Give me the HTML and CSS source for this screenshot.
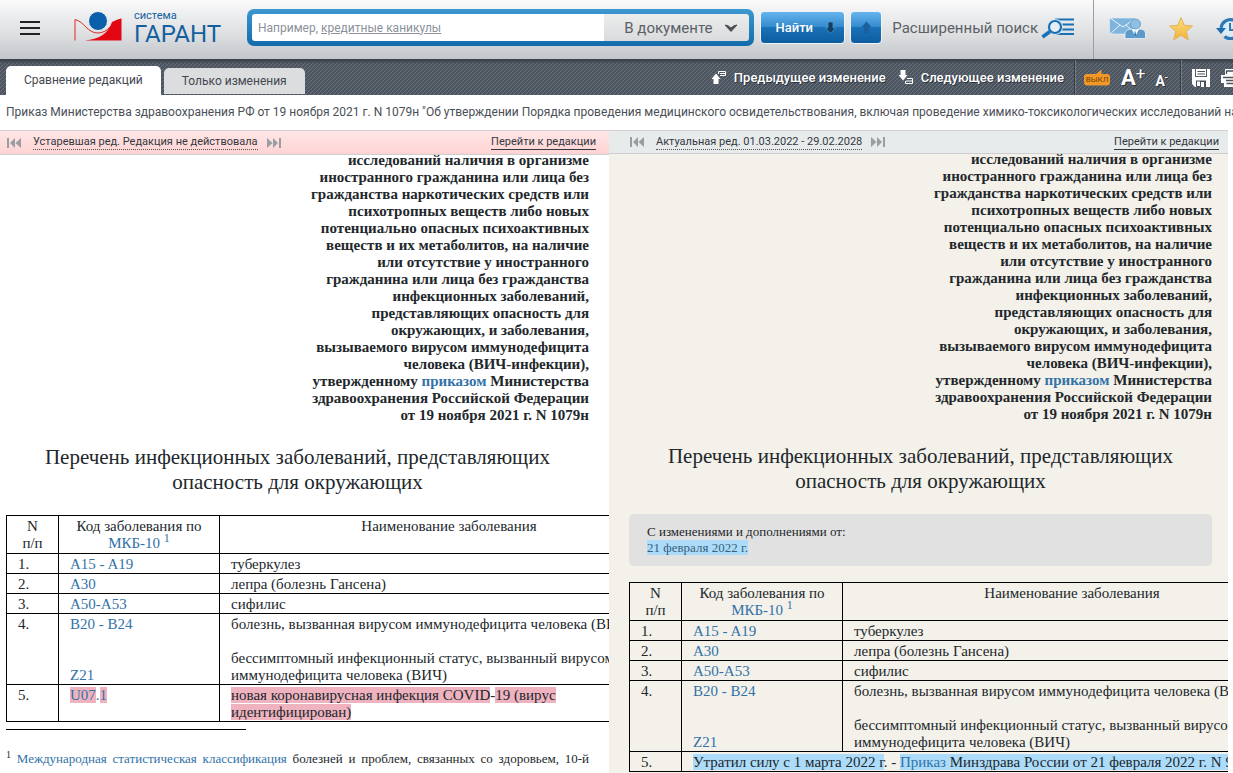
FILE: index.html
```html
<!DOCTYPE html>
<html lang="ru">
<head>
<meta charset="utf-8">
<title>Сравнение редакций — ГАРАНТ</title>
<link rel="stylesheet" href="styles.css">
</head>
<body>
<header class="header">
  <button class="menu" aria-label="Меню"><span></span><span></span><span></span></button>
  <a class="logo" href="#">
    <svg width="48" height="32" viewBox="0 0 48 32" aria-hidden="true">
      <path d="M1 30.500V9.500C11 12 13 23 24 23S37 12 47 9" fill="none" stroke="#e0282a" stroke-width="1"/>
      <path d="M47.500 8.500V30.500H11C25 29 34 24 38 12Q42 9.500 47.500 8.500Z" fill="#e30613"/>
      <circle cx="24" cy="11" r="9.500" fill="#0b5ea9" stroke="#f1f2f3" stroke-width="1"/>
    </svg>
    <span class="logo-text"><span class="logo-small">система</span><span class="logo-big">ГАРАНТ</span></span>
  </a>
  <form class="search">
    <div class="search-box">
      <div class="query">
        <input id="q" type="text" aria-label="Поиск">
        <label class="hint" for="q">Например, <u>кредитные каникулы</u></label>
      </div>
      <div class="scope">
        <select aria-label="Область поиска"><option>В документе</option></select>
        <svg width="14" height="10" viewBox="0 0 14 10" aria-hidden="true"><path d="M1 2Q4 2 7 5Q10 2 13 2L7 8.500Z" fill="#4a4f56" stroke="#4a4f56"/></svg>
      </div>
    </div>
    <button class="blue find" type="button">Найти
      <svg width="11" height="13" viewBox="0 0 11 13" aria-hidden="true"><path d="M3 1H8V7H10.500L5.500 12.500L.5 7H3Z" fill="#123f66" stroke="#5aa4dd" stroke-width=".6"/></svg>
    </button>
    <button class="blue up" type="button" aria-label="Найти выше">
      <svg width="11" height="13" viewBox="0 0 11 13" aria-hidden="true"><path d="M3 12H8V6H10.500L5.500 .5L.5 6H3Z" fill="#1b5f9b"/></svg>
    </button>
  </form>
  <a class="advanced" href="#">Расширенный поиск
    <svg width="34" height="22" viewBox="0 0 34 22" aria-hidden="true">
      <path d="M14 2.500H33M20 7.500H33M20 12.500H33M15 17H33" stroke="#1571b8" stroke-width="2.200"/>
      <circle cx="14" cy="10" r="8" fill="#dfe1e4"/>
      <circle cx="14" cy="10" r="6" fill="#e6edf4" stroke="#1571b8" stroke-width="2.200"/>
      <path d="M9 14.500L1.500 20" stroke="#1571b8" stroke-width="3.500"/>
    </svg>
  </a>
  <nav class="tools" aria-label="Сервисы">
    <a href="#" aria-label="Сообщения">
      <svg width="37" height="24" viewBox="0 0 37 24" aria-hidden="true">
        <path d="M.5 2H27V18H.5Z" fill="#7fb5dc" stroke="#e8f2fa" stroke-width=".6"/>
        <path d="M1 2L14 11L27 2M1 18L11 9M27 18L17 9" stroke="#e8f2fa" fill="none"/>
        <path d="M16 22.500V17Q17 13 23 13L26 17L30 13Q36 13 36.500 17V22.500Z" fill="#5d9aca" stroke="#e8f2fa" stroke-width=".8"/>
        <path d="M23 13L26 21L30 13Z" fill="#fff"/><path d="M26 14L27.500 20L25 20Z" fill="#2f79b4"/>
        <circle cx="26.500" cy="8" r="5" fill="#8fc0e4" stroke="#6aa3d0"/>
      </svg>
    </a>
    <a href="#" aria-label="Избранное">
      <svg width="26" height="26" viewBox="0 0 26 26" aria-hidden="true">
        <defs><linearGradient id="gold" x2="0" y2="1"><stop stop-color="#fbe08a"/><stop offset="1" stop-color="#f2b234"/></linearGradient></defs>
        <path d="M13 2.500L16.300 10.300L24.500 11L18.300 16.500L20.300 24.800L13 20.300L5.700 24.800L7.700 16.500L1.500 11L9.700 10.300Z" fill="url(#gold)" stroke="#e3b354"/>
      </svg>
    </a>
    <a href="#" aria-label="История">
      <svg width="27" height="24" viewBox="0 0 27 24" aria-hidden="true">
        <path d="M5 12A9.500 9.500 0 1 1 8.500 20.500" fill="#dcecf7" stroke="#2d7ab5" stroke-width="3.200"/>
        <path d="M0 12H10L5 18Z" fill="#1e6eae"/>
        <path d="M14 7V14H19" stroke="#2d7ab5" stroke-width="2" fill="none"/>
      </svg>
    </a>
  </nav>
</header>
<div class="bar">
  <nav class="tabs">
    <a class="tab active" href="#">Сравнение редакций</a>
    <a class="tab" href="#">Только изменения</a>
  </nav>
  <div class="actions">
    <a class="change" href="#">
      <svg width="16" height="15" viewBox="0 0 16 15" aria-hidden="true"><path d="M5 3.500L9.500 9H7.500V14H2.500V9H.5Z" fill="#fff"/><path d="M7.500 4V1.500H14.500V5.500H9M9 3.500H14" stroke="#fff" fill="none"/></svg>
      Предыдущее изменение</a>
    <a class="change" href="#">
      <svg width="16" height="15" viewBox="0 0 16 15" aria-hidden="true"><path d="M2.500 0H7.500V5H9.500L5 10.500L.5 5H2.500Z" fill="#fff"/><path d="M9 8.500H14.500V13.500H7.500V11M8 11H14" stroke="#fff" fill="none"/></svg>
      Следующее изменение</a>
  </div>
  <div class="group">
    <button class="off" aria-label="Выключить комментарии">
      <svg width="28" height="18" viewBox="0 0 28 18" aria-hidden="true"><path d="M4 5H13L18.500 .5V5H24Q27 5 27 8V13Q27 16.500 24 16.500H4Q1 16.500 1 13V8Q1 5 4 5Z" fill="#f0982a"/></svg>
      <span>ВЫКЛ</span>
    </button>
    <button class="font larger">A<sup>+</sup></button>
    <button class="font smaller">A<sup>-</sup></button>
  </div>
  <div class="group files">
    <button aria-label="Сохранить">
      <svg width="20" height="20" viewBox="0 0 20 20" aria-hidden="true"><path d="M1 1H4V9H16V1H19V19H4L1 16Z" fill="#fff"/><path d="M5 1H15V8H5Z" fill="#fff"/><path d="M6.500 3.500H14M6.500 6H14" stroke="#49515b"/><path d="M5 12.500H15V19H13V14H10V19H5Z" fill="#49515b"/><path d="M6 13.500H9V18H6Z" fill="#fff"/></svg>
    </button>
    <button aria-label="Печать">
      <svg width="22" height="20" viewBox="0 0 22 20" aria-hidden="true"><path d="M5 1H17V6H20L22 8V15H18V19H4V15H1V7H5Z" fill="#fff"/><path d="M6.500 6V3H16V6M3 9.500H20M6 12.500H16M6.500 15.500H15" stroke="#49515b" stroke-width="1.300" fill="none"/></svg>
    </button>
  </div>
</div>
<h1 class="title">Приказ Министерства здравоохранения РФ от 19 ноября 2021 г. N 1079н "Об утверждении Порядка проведения медицинского освидетельствования, включая проведение химико-токсикологических исследований наличия</h1>
<main class="panes">
  <section class="pane old">
    <div class="pane-head">
      <button class="skip" aria-label="Предыдущая редакция"><svg width="14" height="10" viewBox="0 0 14 10" aria-hidden="true"><path d="M0 0H2V10H0ZM8 0V10L3 5ZM14 0V10L8.500 5Z"/></svg></button>
      <a class="edition" href="#">Устаревшая ред. Редакция не действовала</a>
      <button class="skip" aria-label="Следующая редакция"><svg width="14" height="10" viewBox="0 0 14 10" aria-hidden="true"><path d="M12 0H14V10H12ZM6 0V10L11 5ZM0 0V10L5.500 5Z"/></svg></button>
      <a class="goto" href="#">Перейти к редакции</a>
    </div>
    <article class="doc">
      <p class="appendix">исследований наличия в организме<br>иностранного гражданина или лица без<br>гражданства наркотических средств или<br>психотропных веществ либо новых<br>потенциально опасных психоактивных<br>веществ и их метаболитов, на наличие<br>или отсутствие у иностранного<br>гражданина или лица без гражданства<br>инфекционных заболеваний,<br>представляющих опасность для<br>окружающих, и заболевания,<br>вызываемого вирусом иммунодефицита<br>человека (ВИЧ-инфекции),<br>утвержденному <a href="#">приказом</a> Министерства<br>здравоохранения Российской Федерации<br>от 19 ноября 2021 г. N 1079н</p>
      <h2>Перечень инфекционных заболеваний, представляющих опасность для окружающих</h2>
      <table>
        <colgroup><col class="c-num"><col class="c-code"><col></colgroup>
        <thead><tr><th>N<br>п/п</th><th>Код заболевания по <a href="#">МКБ-10</a> <a href="#"><sup>1</sup></a></th><th>Наименование заболевания</th></tr></thead>
        <tbody>
          <tr><td>1.</td><td><a href="#">A15 - A19</a></td><td>туберкулез</td></tr>
          <tr><td>2.</td><td><a href="#">A30</a></td><td>лепра (болезнь Гансена)</td></tr>
          <tr><td>3.</td><td><a href="#">A50-A53</a></td><td>сифилис</td></tr>
          <tr><td>4.</td><td><a href="#">B20 - B24</a><br><br><br><a href="#">Z21</a></td><td>болезнь, вызванная вирусом иммунодефицита человека (ВИЧ)<br><br>бессимптомный инфекционный статус, вызванный вирусом<br>иммунодефицита человека (ВИЧ)</td></tr>
          <tr><td>5.</td><td><a href="#"><del>U07</del>.<del>1</del></a></td><td><del>новая коронавирусная инфекция COVID</del>-<del>19 (вирус<br>идентифицирован)</del></td></tr>
        </tbody>
      </table>
      <hr>
      <p class="footnote"><sup>1</sup> <a href="#">Международная статистическая классификация</a> болезней и проблем, связанных со здоровьем, 10-й</p>
    </article>
  </section>
  <section class="pane new">
    <div class="pane-head">
      <button class="skip" aria-label="Предыдущая редакция"><svg width="14" height="10" viewBox="0 0 14 10" aria-hidden="true"><path d="M0 0H2V10H0ZM8 0V10L3 5ZM14 0V10L8.500 5Z"/></svg></button>
      <a class="edition" href="#">Актуальная ред. 01.03.2022 - 29.02.2028</a>
      <button class="skip" aria-label="Следующая редакция"><svg width="14" height="10" viewBox="0 0 14 10" aria-hidden="true"><path d="M12 0H14V10H12ZM6 0V10L11 5ZM0 0V10L5.500 5Z"/></svg></button>
      <a class="goto" href="#">Перейти к редакции</a>
    </div>
    <article class="doc">
      <p class="appendix">исследований наличия в организме<br>иностранного гражданина или лица без<br>гражданства наркотических средств или<br>психотропных веществ либо новых<br>потенциально опасных психоактивных<br>веществ и их метаболитов, на наличие<br>или отсутствие у иностранного<br>гражданина или лица без гражданства<br>инфекционных заболеваний,<br>представляющих опасность для<br>окружающих, и заболевания,<br>вызываемого вирусом иммунодефицита<br>человека (ВИЧ-инфекции),<br>утвержденному <a href="#">приказом</a> Министерства<br>здравоохранения Российской Федерации<br>от 19 ноября 2021 г. N 1079н</p>
      <h2>Перечень инфекционных заболеваний, представляющих опасность для окружающих</h2>
      <p class="note">С изменениями и дополнениями от:<br><ins>21 февраля 2022 г.</ins></p>
      <table>
        <colgroup><col class="c-num"><col class="c-code"><col></colgroup>
        <thead><tr><th>N<br>п/п</th><th>Код заболевания по <a href="#">МКБ-10</a> <a href="#"><sup>1</sup></a></th><th>Наименование заболевания</th></tr></thead>
        <tbody>
          <tr><td>1.</td><td><a href="#">A15 - A19</a></td><td>туберкулез</td></tr>
          <tr><td>2.</td><td><a href="#">A30</a></td><td>лепра (болезнь Гансена)</td></tr>
          <tr><td>3.</td><td><a href="#">A50-A53</a></td><td>сифилис</td></tr>
          <tr><td>4.</td><td><a href="#">B20 - B24</a><br><br><br><a href="#">Z21</a></td><td>болезнь, вызванная вирусом иммунодефицита человека (ВИЧ)<br><br>бессимптомный инфекционный статус, вызванный вирусом<br>иммунодефицита человека (ВИЧ)</td></tr>
          <tr><td>5.</td><td colspan="2"><ins>Утратил силу с 1 марта 2022 г</ins>. - <ins><a href="#">Приказ</a> Минздрава России от 21 февраля 2022 г. N 90н</ins></td></tr>
        </tbody>
      </table>
    </article>
  </section>
</main>
</body>
</html>
```

FILE: styles.css
```css
* { box-sizing: border-box; }
body {
  margin: 0;
  height: 100vh;
  display: flex;
  flex-direction: column;
  overflow: hidden;
  font-family: Roboto, sans-serif;
  font-size: 13px;
  color: #4a4f56;
  background: #fff;
}
a { color: inherit; text-decoration: none; }
button { border: 0; padding: 0; background: none; font: inherit; color: inherit; }
svg { display: block; flex: none; }

.header {
  flex: none;
  height: 60px;
  display: flex;
  align-items: center;
  background: linear-gradient(#fafafb, #dcdee0 60%, #c3c6ca);
  border-bottom: 1px solid #3b424c;
  overflow: hidden;
}
.menu { flex: none; width: 20px; margin: 0 34px 4px 20px; display: flex; flex-direction: column; gap: 4px; }
.menu span { height: 2px; background: #1f2328; }
.logo { flex: none; width: 173px; margin-bottom: 4px; display: flex; gap: 12px; color: #14609f; }
.logo-text { display: flex; flex-direction: column; }
.logo-small { font-size: 11px; line-height: 12px; }
.logo-big { font-size: 24px; line-height: 24px; }
.search { flex: 1; min-width: 0; display: flex; align-items: center; gap: 5px; margin-bottom: 4px; }
.search-box {
  flex: 1;
  height: 37px;
  margin-right: 1px;
  padding: 5px;
  display: flex;
  border-radius: 7px;
  background: linear-gradient(#3d97d0, #126cab);
}
.query { flex: 1; display: grid; align-items: center; background: #fff; border-radius: 3px 0 0 3px; }
.query input { grid-area: 1 / 1; width: 100%; height: 27px; border: 0; padding: 0 6px; background: none; font: inherit; outline: 0; }
.hint { grid-area: 1 / 1; padding-left: 6px; font-size: 12px; color: #8b9299; pointer-events: none; }
.scope { width: 145px; display: grid; align-items: center; border-radius: 0 3px 3px 0; background: linear-gradient(#eceded, #d9dbdd); }
.scope select {
  grid-area: 1 / 1;
  appearance: none;
  width: 100%;
  padding: 0 0 0 20px;
  border: 0;
  background: none;
  font: 15px Roboto, sans-serif;
  color: #5b6066;
}
.scope svg { grid-area: 1 / 1; justify-self: end; margin-right: 11px; pointer-events: none; }
.blue {
  flex: none;
  height: 33px;
  display: flex;
  align-items: center;
  justify-content: center;
  border: 1px solid #eef4fa;
  border-radius: 4px;
  color: #fff;
  font-weight: 500;
  background: linear-gradient(#66b4ee, #3389cc 50%, #1a72b8 50%, #0d5c9f);
}
.find { width: 85px; padding-left: 6px; gap: 12px; }
.up { width: 32px; }
.advanced { flex: none; display: flex; align-items: center; gap: 3px; margin: 0 18px 3px 10px; font-size: 15px; color: #5b6066; }
.tools { flex: none; width: 140px; height: 59px; padding: 0 0 4px 15px; display: flex; align-items: center; gap: 22px; border-left: 1px solid #9b9fa5; }

.bar {
  flex: none;
  height: 35px;
  display: flex;
  overflow: hidden;
  color: #fff;
  background:
    linear-gradient(#3b424c, #3b424c00 4px),
    linear-gradient(135deg, #4d5560 40%, #69717b 40% 60%, #4d5560 60%) 0 0 / 4px 4px;
}
.tabs { display: flex; align-items: flex-end; gap: 3px; padding-left: 6px; font-size: 12px; }
.tab {
  margin-bottom: 1px;
  padding: 0 18px;
  line-height: 26px;
  border-radius: 5px 5px 0 0;
  color: #43484f;
  background: #dcdddf;
}
.tab.active { margin: 0; line-height: 29px; background: #fff; }
.actions { margin-left: auto; display: flex; gap: 12px; align-items: center; padding-right: 11px; font-weight: 500; }
.change { display: flex; align-items: center; gap: 7px; text-shadow: 1px 1px #2e343c; }
.group { flex: none; display: flex; align-items: center; border-left: 1px solid #737a84; box-shadow: -1px 0 #343b45; }
.group:not(.files) { width: 106px; padding-left: 7px; gap: 10px; }
.files { width: 52px; gap: 9px; padding-left: 9px; }
.off { display: grid; align-items: end; justify-items: center; }
.off svg, .off span { grid-area: 1 / 1; }
.off span { font-size: 8px; line-height: 14px; color: #7b4300; }
.font { display: flex; align-items: flex-start; font-weight: 700; text-shadow: 1px 1px #2e343c; }
.font sup { font-weight: 400; }
.larger { font-size: 22px; line-height: 24px; }
.larger sup { font-size: 17px; line-height: 14px; }
.smaller { font-size: 14px; line-height: 22px; align-self: flex-end; margin-bottom: 3px; }
.smaller sup { font-size: 11px; line-height: 16px; }

.title {
  flex: none;
  margin: 0;
  padding-left: 6px;
  font-size: 12px;
  font-weight: 400;
  line-height: 35px;
  white-space: nowrap;
  overflow: hidden;
}
.panes { flex: 1; min-height: 0; display: grid; grid-template-columns: 609fr 619fr; padding-right: 5px; }
.pane { min-width: 0; overflow: hidden; display: flex; flex-direction: column; }
.pane-head {
  flex: none;
  height: 25px;
  display: flex;
  align-items: center;
  gap: 12px;
  font-size: 11px;
  color: #33383e;
  border-top: 1px solid #d3cfd2;
  border-bottom: 1px solid #d0cdd0;
}
.old .pane-head { padding: 0 13px 0 7px; background: linear-gradient(#ffe6e6, #ffd3d3); }
.new .pane-head { height: 24px; padding: 0 9px 0 21px; background: #e7ebec; }
.skip svg { fill: #9a9ea3; }
.edition { border-bottom: 1px dotted #555; line-height: 14px; }
.edition + .skip { margin-left: -3px; }
.goto { margin-left: auto; border-bottom: 1px solid #33383e; line-height: 14px; }

.doc {
  flex: 1;
  min-height: 0;
  overflow: hidden;
  padding: 0 20px 0 6px;
  font: 15px/17px "Liberation Serif", serif;
  color: #22272b;
}
.new .doc { padding: 0 16px 0 20px; background: #f3f1ea; }
.doc a { color: #3272a8; }
.appendix { margin: -3px 0 0; font-weight: 700; text-align: right; }
.doc h2 { margin: 21px 0 20px; padding: 0 20px; font-size: 21px; line-height: 25px; font-weight: 400; text-align: center; }
table { width: 673px; table-layout: fixed; border-collapse: collapse; }
.c-num { width: 52px; }
.c-code { width: 161px; }
th, td { padding: 2px 11px 0; border: 1px solid #000; vertical-align: top; text-align: left; font-weight: 400; }
th { padding-bottom: 1px; text-align: center; }
.doc sup { font-size: 12px; line-height: 0; }
del { text-decoration: none; background: #efb3c0; }
ins { text-decoration: none; background: #acdcfa; }
hr { width: 240px; margin: 7px 0 20px; border: 0; border-top: 1px solid #000; }
.footnote { margin: 0; font-size: 13px; text-align: justify; text-align-last: justify; }
.footnote sup { font-size: 10px; }
.note { margin: 0 0 16px; padding: 10px 18px; border-radius: 5px; background: #e1e1e1; font-size: 13px; line-height: 16px; }
.note ins { color: #3b5f7a; }
```
